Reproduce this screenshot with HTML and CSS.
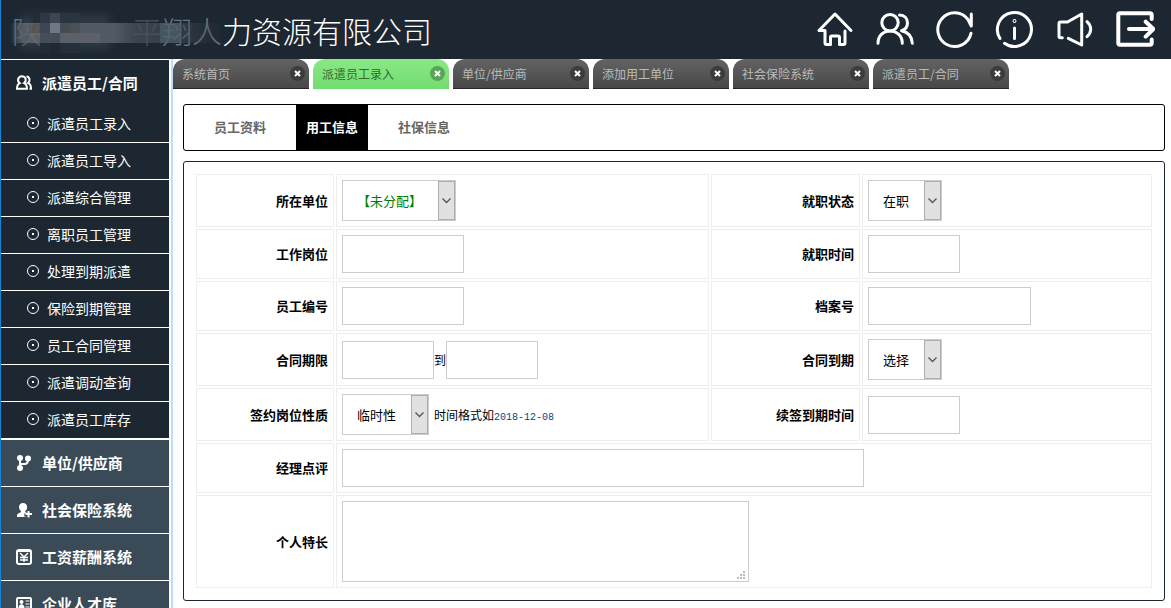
FILE: index.html
```html
<!DOCTYPE html>
<html lang="zh-CN">
<head>
<meta charset="utf-8">
<meta name="viewport" content="width=device-width, initial-scale=1">
<title>人力资源有限公司</title>
<link rel="stylesheet" href="styles.css">
</head>
<body>
<div class="app">
  <header class="topbar">
    <h1 class="brand"><span class="faint">陕</span><span class="hidden-name" aria-hidden="true"></span><span class="dimmer">平</span><span class="faint">翔人</span>力资源有限公司
      <svg class="mosaic" viewBox="0 0 230 50" aria-hidden="true">
        <defs>
          <filter id="soft" x="-20%" y="-40%" width="140%" height="180%"><feGaussianBlur stdDeviation="5"/></filter>
          <linearGradient id="band"><stop offset="0" stop-color="#5d656d" stop-opacity="0"/><stop offset=".06" stop-color="#5d656d"/><stop offset=".5" stop-color="#5b626b"/><stop offset=".6" stop-color="#4c545e" stop-opacity=".8"/><stop offset=".8" stop-color="#49515b" stop-opacity=".6"/><stop offset="1" stop-color="#3d4650" stop-opacity=".1"/></linearGradient>
        </defs>
        <rect x="20" y="12" width="90" height="34" fill="#38434e" filter="url(#soft)" opacity=".8"/>
        <rect x="10" y="20" width="210" height="20" fill="url(#band)"/>
        <rect x="30" y="10" width="10" height="10" fill="#242e39"/>
        <rect x="40" y="10" width="10" height="10" fill="#303c48"/>
        <rect x="50" y="10" width="10" height="10" fill="#424c58"/>
        <rect x="60" y="10" width="20" height="10" fill="#2d3843"/>
        <rect x="30" y="20" width="10" height="10" fill="#5c5b58"/>
        <rect x="40" y="20" width="10" height="10" fill="#424d59"/>
        <rect x="50" y="20" width="10" height="10" fill="#7d8795"/>
        <rect x="60" y="20" width="10" height="10" fill="#4a535e"/>
        <rect x="70" y="20" width="10" height="10" fill="#55585e"/>
        <rect x="30" y="30" width="10" height="10" fill="#66696d"/>
        <rect x="40" y="30" width="20" height="10" fill="#4d555e"/>
        <rect x="60" y="30" width="40" height="10" fill="#686c73"/>
        <rect x="40" y="40" width="10" height="10" fill="#222d38"/>
        <rect x="50" y="40" width="10" height="10" fill="#1f2a36"/>
        <rect x="60" y="40" width="20" height="10" fill="#26313d"/>
        <rect x="160" y="20" width="20" height="20" fill="#526470" opacity=".8"/>
      </svg>
    </h1>
    <nav class="tools" aria-label="工具">
      <a href="#" aria-label="首页"><svg viewBox="0 0 40 40"><path d="M10 20.500H4L20 4l16 16.500M10 20.500v12.500q0 1.500 1.500 1.500h4V27.500q0-1.500 1.500-1.500h6q1.500 0 1.500 1.500v7h4q1.500 0 1.500-1.500v-12"/></svg></a>
      <a href="#" aria-label="用户"><svg viewBox="0 0 40 40"><circle cx="15" cy="12.700" r="8.200"/><path d="M3 33.300C3 26 8 21 15 21s12.300 5 12.300 12.300M24.500 5c5 0 8 3.500 8 8 0 3.500-2 6.500-6 7.700 7 1.500 10.500 6 10.800 12.600"/></svg></a>
      <a href="#" aria-label="刷新"><svg viewBox="0 0 40 40"><path d="M36 23.300A16.800 16.800 0 1 1 33 9.500L36.300 16V4"/></svg></a>
      <a href="#" aria-label="信息"><svg viewBox="0 0 40 40"><path d="M9.500 33.300A17 17 0 1 0 5 28.500"/><path d="M19.500 18v10.500"/><circle class="solid" cx="19.500" cy="11" r="0.500"/></svg></a>
      <a href="#" aria-label="公告"><svg viewBox="0 0 40 40"><path d="M7.300 27.700H5.500Q4 27.700 4 26V13.500Q4 12 5.500 12h7L26.700 4v31l-13.400-6.700M32 11.700q3.500 3 3.700 7.600-.2 4.500-3.700 7.400"/></svg></a>
      <a class="exit" href="#" aria-label="退出"><svg viewBox="0 0 40 40"><path d="M36.700 9V5q0-1.700-1.700-1.700H5Q3.300 3.300 3.300 5v28q0 1.700 1.700 1.700h30q1.700 0 1.700-1.700v-3.500M14 19h24M30.700 11.700l7.600 7.300-7.600 7.700"/></svg></a>
    </nav>
  </header>
  <div class="body">
    <nav class="sidebar" aria-label="主菜单">
      <a class="group open" href="#"><svg viewBox="0 0 16 16"><path class="line" d="M5.800 1.200a3.800 3.800 0 0 1 2.300 6.900c2 .8 2.900 2.500 2.900 5.700H1c0-3.200.8-4.900 2.700-5.700a3.800 3.800 0 0 1 2.100-6.900zM10.500 1.500c3.500.4 4 4.800 1.500 6.500 2 .7 3 2.500 3 5.800h-1.500"/></svg>派遣员工/合同</a>
      <ul class="sub">
        <li><a href="#"><i class="dot"></i>派遣员工录入</a></li>
        <li><a href="#"><i class="dot"></i>派遣员工导入</a></li>
        <li><a href="#"><i class="dot"></i>派遣综合管理</a></li>
        <li><a href="#"><i class="dot"></i>离职员工管理</a></li>
        <li><a href="#"><i class="dot"></i>处理到期派遣</a></li>
        <li><a href="#"><i class="dot"></i>保险到期管理</a></li>
        <li><a href="#"><i class="dot"></i>员工合同管理</a></li>
        <li><a href="#"><i class="dot"></i>派遣调动查询</a></li>
        <li><a href="#"><i class="dot"></i>派遣员工库存</a></li>
      </ul>
      <a class="group" href="#"><svg viewBox="0 0 16 16"><circle cx="4" cy="3" r="3"/><circle cx="12" cy="3.500" r="3"/><circle cx="4" cy="13" r="3"/><path class="line" d="M4 4v8M4 9h4.500Q12 9 12 5"/></svg>单位/供应商</a>
      <a class="group" href="#"><svg viewBox="0 0 16 16"><path d="M7 1c2.600 0 4.200 1.800 4.200 4.200 0 1.600-.8 3-1.900 3.800v1.200l1.200.3v1.100H8.300v3H9.800V15H1v-1.500c0-1.800 2-2.600 4-3.300V9C3.800 8.200 3 6.800 3 5.200 3 2.800 4.400 1 7 1zM11.500 9h2v2H16v2h-2.500v2.500h-2V13H9.500v-2h2z"/></svg>社会保险系统</a>
      <a class="group" href="#"><svg viewBox="0 0 16 16"><rect class="line" x="1" y="1" width="14" height="14" rx="2"/><path d="M1 1h14v2H1z"/><path class="line mid" d="M4 4l4 4 4-4M8 8v5M4 8.500h8M4 11h8"/></svg>工资薪酬系统</a>
      <a class="group" href="#"><svg viewBox="0 0 16 16"><rect class="line" x="1" y="2" width="14" height="12" rx="1"/><circle cx="5.500" cy="6" r="2"/><path d="M2.500 12c0-5 6-5 6 0z"/><path class="line thin" d="M9.500 5h4M9.500 8h4M9.500 11h4"/></svg>企业人才库</a>
    </nav>
    <main class="main">
      <ul class="pages">
        <li><a href="#">系统首页</a><button type="button" aria-label="关闭"><svg viewBox="0 0 7 7"><path d="M1 1l5 5M6 1L1 6"/></svg></button></li>
        <li class="current"><a href="#">派遣员工录入</a><button type="button" aria-label="关闭"><svg viewBox="0 0 7 7"><path d="M1 1l5 5M6 1L1 6"/></svg></button></li>
        <li><a href="#">单位/供应商</a><button type="button" aria-label="关闭"><svg viewBox="0 0 7 7"><path d="M1 1l5 5M6 1L1 6"/></svg></button></li>
        <li><a href="#">添加用工单位</a><button type="button" aria-label="关闭"><svg viewBox="0 0 7 7"><path d="M1 1l5 5M6 1L1 6"/></svg></button></li>
        <li><a href="#">社会保险系统</a><button type="button" aria-label="关闭"><svg viewBox="0 0 7 7"><path d="M1 1l5 5M6 1L1 6"/></svg></button></li>
        <li><a href="#">派遣员工/合同</a><button type="button" aria-label="关闭"><svg viewBox="0 0 7 7"><path d="M1 1l5 5M6 1L1 6"/></svg></button></li>
      </ul>
      <div class="content">
        <nav class="steps" aria-label="资料分类">
          <a href="#">员工资料</a>
          <a class="current" href="#">用工信息</a>
          <a href="#">社保信息</a>
        </nav>
        <form class="panel">
          <table>
            <colgroup><col class="c1"><col><col class="c3"><col class="c4"></colgroup>
            <tbody>
              <tr>
                <th><label for="unit">所在单位</label></th>
                <td><select id="unit" class="unit"><option>【未分配】</option></select></td>
                <th><label for="state">就职状态</label></th>
                <td><select id="state" class="short"><option>在职</option></select></td>
              </tr>
              <tr>
                <th><label for="post">工作岗位</label></th>
                <td><input id="post" class="medium" type="text"></td>
                <th><label for="start">就职时间</label></th>
                <td><input id="start" class="date" type="text"></td>
              </tr>
              <tr>
                <th><label for="number">员工编号</label></th>
                <td><input id="number" class="medium" type="text"></td>
                <th><label for="file">档案号</label></th>
                <td><input id="file" class="file" type="text"></td>
              </tr>
              <tr>
                <th><label for="from">合同期限</label></th>
                <td><div class="line-up"><input id="from" class="date" type="text"><label for="to">到</label><input id="to" class="date" type="text"></div></td>
                <th><label for="expire">合同到期</label></th>
                <td><select id="expire" class="short"><option>选择</option></select></td>
              </tr>
              <tr>
                <th><label for="kind">签约岗位性质</label></th>
                <td><div class="line-up"><select id="kind" class="kind"><option>临时性</option></select><span class="hint">时间格式如<span class="sample">2018-12-08</span></span></div></td>
                <th><label for="renew">续签到期时间</label></th>
                <td><input id="renew" class="date" type="text"></td>
              </tr>
              <tr>
                <th><label for="review">经理点评</label></th>
                <td colspan="3"><input id="review" class="review" type="text"></td>
              </tr>
              <tr>
                <th><label for="skill">个人特长</label></th>
                <td colspan="3"><div class="area"><textarea id="skill"></textarea><svg class="grip" viewBox="0 0 8 8" aria-hidden="true"><path d="M6 0h2v2H6zM3 3h2v2H3zM6 3h2v2H6zM0 6h2v2H0zM3 6h2v2H3zM6 6h2v2H6z"/></svg></div></td>
              </tr>
            </tbody>
          </table>
        </form>
      </div>
    </main>
  </div>
</div>
</body>
</html>
```

FILE: styles.css
```css
* { box-sizing: border-box; }
body {
  margin: 0;
  background: #fff;
  color: #000;
  font: 12px/18px "Noto Sans CJK SC", sans-serif;
}
a { color: inherit; text-decoration: none; }
ul { list-style: none; margin: 0; padding: 0; }

.app {
  display: flex;
  flex-direction: column;
  height: 100vh;
  overflow: hidden;
  border-left: 1px solid #1583d8;
}

/* top bar */
.topbar {
  flex: none;
  display: flex;
  align-items: center;
  justify-content: space-between;
  height: 59px;
  padding: 0 16px 0 11px;
  background: #1c2732;
  color: #fff;
}
.brand {
  position: relative;
  margin: 0;
  font-size: 30px;
  font-weight: 300;
  line-height: 54px;
  white-space: nowrap;
}
.faint { color: #69737d; }
.dimmer { color: #444e59; }
.hidden-name { display: inline-block; width: 90px; }
.mosaic {
  position: absolute;
  left: -12px;
  top: 0;
  width: 230px;
  height: 50px;
  opacity: 0.85;
}
.tools { display: flex; gap: 20px; }
.tools svg {
  display: block;
  width: 40px;
  height: 40px;
  fill: none;
  stroke: #fff;
  stroke-width: 3;
  stroke-linecap: round;
  stroke-linejoin: round;
}
.tools .exit svg { stroke-width: 4; }

/* side menu */
.body { flex: 1; display: flex; min-height: 0; }
.sidebar {
  flex: none;
  width: 168px;
  overflow: hidden;
  background: #1c2732;
  color: #fff;
}
.group {
  display: flex;
  align-items: center;
  gap: 10px;
  height: 47px;
  padding-left: 15px;
  border-top: 1px solid #fff;
  background: #3a4a57;
  font-size: 15px;
  font-weight: 700;
}
.group.open { background: #1c2732; }
.group svg { width: 16px; height: 16px; fill: #fff; }
.group .line { fill: none; stroke: #fff; stroke-width: 2; }
.group .mid { stroke-width: 1.4; }
.group .thin { stroke-width: 1; }
.sub a {
  display: flex;
  align-items: center;
  gap: 8px;
  height: 37px;
  padding: 0 0 2px 26px;
  border-bottom: 1px solid #fff;
  font-size: 14px;
}
.dot {
  width: 12px;
  height: 12px;
  border: 1px solid #fff;
  border-radius: 50%;
  background: linear-gradient(#fff, #fff) center / 2px 2px no-repeat;
}

/* page tabs */
.main {
  flex: 1;
  min-width: 0;
  margin-left: 2px;
  border-left: 2px solid #bbddff;
}
.pages { display: flex; gap: 4px; }
.pages li {
  display: flex;
  align-items: center;
  justify-content: space-between;
  width: 136px;
  height: 30px;
  padding: 0 4px 0 9px;
  border-bottom: 1px solid #2b252b;
  border-radius: 12px 12px 0 0;
  background: linear-gradient(#636363, #484848);
  color: #bbb;
}
.pages .current {
  border-color: #70db70;
  background: linear-gradient(#8ae887, #74dc70);
  color: #2f6d2f;
}
.pages button {
  display: flex;
  align-items: center;
  justify-content: center;
  width: 15px;
  height: 15px;
  padding: 0;
  border: 0;
  border-radius: 50%;
  background: #3c3c3c;
}
.pages .current button { background: #57a657; }
.pages button svg {
  width: 7px;
  height: 7px;
  fill: none;
  stroke: #fff;
  stroke-width: 2;
}

/* content */
.content {
  display: flex;
  flex-direction: column;
  gap: 10px;
  padding: 15px 6px 0 10px;
}
.steps {
  display: flex;
  gap: 20px;
  height: 47px;
  padding: 0 20px;
  border: 1px solid #000;
  border-radius: 3px;
}
.steps a {
  display: flex;
  align-items: center;
  padding: 0 10px 2px;
  color: #666;
  font-size: 13px;
  font-weight: 700;
}
.steps .current { background: #000; color: #fff; }
.panel {
  padding: 10px;
  border: 1px solid #1c2732;
  border-radius: 3px;
}

table {
  width: 100%;
  table-layout: fixed;
  border-collapse: separate;
  border-spacing: 2px;
}
.c1 { width: 138px; }
.c3 { width: 149px; }
.c4 { width: 290px; }
th, td {
  padding: 5px;
  border: 1px solid #eee;
  vertical-align: middle;
}
th { text-align: right; font-size: 13px; }

input, select, textarea {
  display: block;
  margin: 0;
  border: 1px solid #ccc;
  border-radius: 0;
  background: #fff;
  color: #000;
  font: 13px/18px "Noto Sans CJK SC", sans-serif;
}
input { height: 38px; padding: 0 10px; }
select {
  appearance: none;
  height: 41px;
  padding: 0 18px 0 14px;
  background: #fff url("data:image/svg+xml,%3Csvg xmlns='http://www.w3.org/2000/svg' width='17' height='39'%3E%3Crect x='.5' y='.5' width='16' height='38' fill='%23e1e1e1' stroke='%23adadad'/%3E%3Cpath d='M4.500 17.500l4 4 4-4' fill='none' stroke='%23555' stroke-width='1.300'/%3E%3C/svg%3E") no-repeat right center;
}
.unit { width: 114px; color: #008000; }
.short { width: 74px; }
.kind { width: 87px; }
.medium { width: 122px; }
.date { width: 92px; }
.file { width: 163px; }
.review { width: 522px; }
.line-up { display: flex; align-items: center; }
.hint { margin-left: 5px; padding-top: 3px; }
.sample {
  color: #00468c;
  font: 10px/18px "Liberation Mono", monospace;
}
.area { position: relative; width: 407px; }
textarea { width: 100%; height: 81px; padding: 10px; resize: none; }
.grip {
  position: absolute;
  right: 4px;
  bottom: 3px;
  width: 8px;
  height: 8px;
  fill: #bbb;
}
```
